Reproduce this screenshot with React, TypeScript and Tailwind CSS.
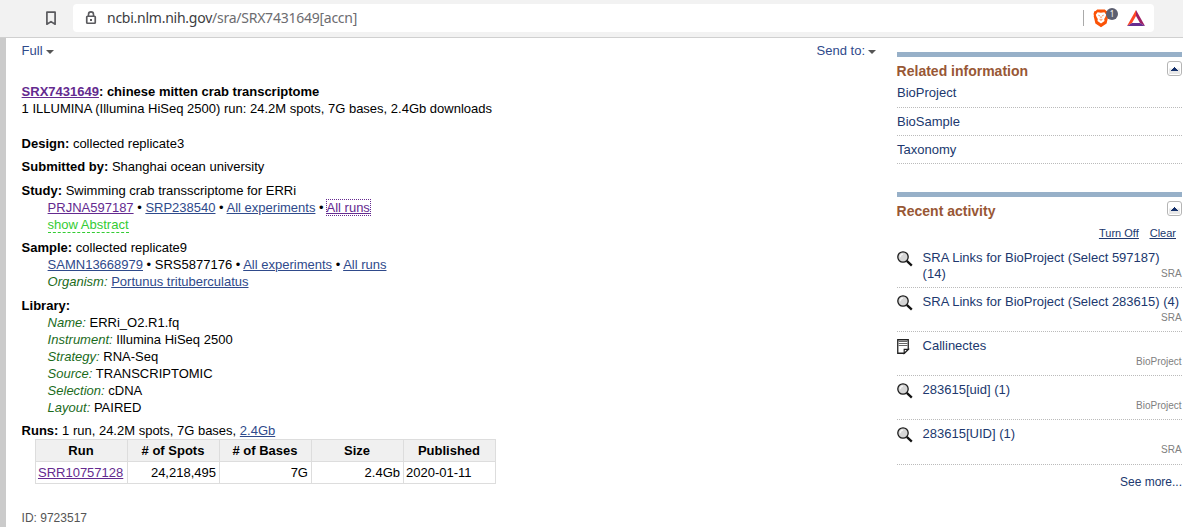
import React from "react";

type Kids = { children: React.ReactNode };

const Link = ({ children }: Kids) => (
  <a className="text-[#2f4a8b] underline">{children}</a>
);
const Visited = ({ children }: Kids) => (
  <a className="text-[#642a8f] underline">{children}</a>
);

const Caret = () => (
  <svg className="ml-[3px] mt-[2px]" width="8" height="4" viewBox="0 0 8 4">
    <path d="M0 0h8L4 4z" fill="#555" />
  </svg>
);

const Bookmark = () => (
  <svg width="12" height="15" viewBox="0 0 12 15">
    <path d="M1.9 1.2h8.2v12L6 10.6l-4.1 2.6z" fill="none" stroke="#5a5a5e" strokeWidth="1.7" strokeLinejoin="round" />
  </svg>
);

const Lock = () => (
  <svg width="12" height="14" viewBox="0 0 12 14">
    <rect x="1.75" y="5.25" width="8.5" height="7" rx="0.8" fill="none" stroke="#5a5a5e" strokeWidth="1.7" />
    <path d="M3.5 5V3.4a2.5 2.5 0 0 1 5 0V5" fill="none" stroke="#5a5a5e" strokeWidth="1.6" />
    <rect x="5" y="8" width="2" height="2" fill="#5a5a5e" />
  </svg>
);

const Lion = () => (
  <svg width="16" height="19" viewBox="0 0 16 19">
    <path d="M4.2 0.5h7.6l1.6 1.6 1.3.2.8 2.7-.4 1.2.2 1-1.7 7.4L8 18.3l-5.6-3.7L.7 7.2l.2-1L.5 5l.8-2.7 1.3-.2z" fill="#fb5206" />
    <path d="M4.6 3.2 8 3.8l3.4-.6 1.8 2.6-.8 2.3-1.2 2 .3 1.8L8 14.5l-3.5-2.6.3-1.8-1.2-2-.8-2.3z" fill="#fff" />
    <path d="M5.4 6.2 6.8 6.9M10.6 6.2 9.2 6.9M8 7.4v1.8M6.6 10.4 8 11.2l1.4-.8" fill="none" stroke="#fb5206" strokeWidth="0.8" />
  </svg>
);

const Triangle = () => (
  <svg width="18" height="16" viewBox="0 0 18 16">
    <path d="M9 0 0 16l5-3L9 6z" fill="#ff4724" />
    <path d="M9 0 18 16l-5-3L9 6z" fill="#9e1f63" />
    <path d="M0 16h18l-5-3H5z" fill="#662d91" />
  </svg>
);

const Magnifier = () => (
  <svg width="16" height="16" viewBox="0 0 16 16">
    <path d="m9.8 9.8 5 4.8" stroke="#111" strokeWidth="2.3" />
    <circle cx="6" cy="6" r="5.2" fill="#d6d6d6" stroke="#1c1c1c" strokeWidth="1.3" />
    <path d="M3.2 6.2A3 3 0 0 1 6 3.2" fill="none" stroke="#f6f6f6" strokeWidth="1.2" />
  </svg>
);

const Note = () => (
  <svg width="13" height="16" viewBox="0 0 13 16">
    <path d="M.75.75h10.5v9.5l-4 4H.75z" fill="#fff" stroke="#222" strokeWidth="1.3" />
    <path d="M1.5 2.5h9M1.5 4.5h9M1.5 6.5h9" stroke="#666" strokeWidth="1" />
    <path d="M7.2 14.4v-4.1h4.2z" fill="#fff" stroke="#222" strokeWidth="1.2" />
  </svg>
);

const Collapse = () => (
  <span className="flex h-[15px] w-[15px] items-center justify-center rounded-[3px] border border-[#b5b5b5] bg-white p-px">
    <span className="flex h-full w-full items-center justify-center bg-linear-to-b from-white from-45% to-[#e8e8e8] to-55%">
      <svg width="7" height="4" viewBox="0 0 7 4">
        <path d="M3 0h1v1h1v1h1v1h1v1H0V3h1V2h1V1h1z" fill="#14306b" />
      </svg>
    </span>
  </span>
);

const PanelHead = ({ children }: Kids) => (
  <div className="flex justify-between border-t-[5px] border-[#97b0c8] pt-[4px] pb-1">
    <h3 className="ml-[-0.4px] pt-[2px] text-[14px] leading-[17px] font-bold text-[#985735]">{children}</h3>
    <Collapse />
  </div>
);

const Activity = ({ icon, label, db }: { icon: "search" | "note"; label: string; db: string }) => (
  <li className="flex h-11 border-b border-dotted border-[#bbb] last:h-[45px]">
    <span className="w-[25.6px] shrink-0 pt-[7px]">{icon === "search" ? <Magnifier /> : <Note />}</span>
    <span className="grid h-[43px] w-[259px] shrink-0">
      <a className="col-start-1 row-start-1 pt-[6px] leading-4 text-[#20386e]">{label}</a>
      <span className="col-start-1 row-start-1 self-end justify-self-end pb-[7px] text-[10px] leading-3 text-[#808080]">
        {db}
      </span>
    </span>
  </li>
);

const Attr = ({ name, children }: Kids & { name: string }) => (
  <div>
    <i className="text-[#1b6b1b]">{name}:</i> {children}
  </div>
);

const headings = ["Run", "# of Spots", "# of Bases", "Size", "Published"];

export default function App() {
  return (
    <div className="flex h-[527px] w-[1183px] flex-col overflow-hidden bg-white font-['Liberation_Sans',sans-serif] text-[13px] leading-[17px] text-black">
      <header className="flex h-[38px] shrink-0 items-start border-b border-[#d0d0d0] bg-[#f2f2f2]">
        <div className="w-[73px] pt-[11px] pl-[45px]">
          <Bookmark />
        </div>
        <div className="mt-1 flex h-7 w-[1081px] items-center rounded-[4px] bg-white pl-3">
          <Lock />
          <span className="ml-[10px] w-[260px] font-['Noto_Sans',sans-serif] text-[14px] leading-5 tracking-[-0.25px] whitespace-nowrap text-[#6c6c70]">
            <span className="text-[#3c3c40]">ncbi.nlm.nih.gov</span>/sra/SRX7431649[accn]
          </span>
          <span className="ml-auto h-4 w-px bg-[#aaa]" />
          <span className="relative ml-[9px]">
            <Lion />
            <span className="absolute top-[-1px] left-[13px] flex h-3 w-3 items-center justify-center rounded-full bg-[#5c5f70] font-['Noto_Sans',sans-serif] text-[8px] leading-3 text-white">
              1
            </span>
          </span>
          <span className="mr-[9px] ml-[18px]">
            <Triangle />
          </span>
        </div>
      </header>

      <div className="flex flex-1">
        <div className="w-[6px] shrink-0 bg-[#cbcbcb]" />
        <main className="w-[870px] shrink-0 pt-1 pl-[15.6px]">
          <div className="flex justify-between">
            <a className="flex items-center text-[#2f4a8b]">
              Full
              <Caret />
            </a>
            <a className="flex items-center text-[#2f4a8b]">
              Send to:
              <Caret />
            </a>
          </div>

          <div className="mt-6">
            <b>
              <Visited>SRX7431649</Visited>: chinese mitten crab transcriptome
            </b>
          </div>
          <div>1 ILLUMINA (Illumina HiSeq 2500) run: 24.2M spots, 7G bases, 2.4Gb downloads</div>

          <div className="mt-[18px]">
            <b>Design:</b> collected replicate3
          </div>
          <div className="mt-[6px]">
            <b>Submitted by:</b> Shanghai ocean university
          </div>
          <div className="mt-[7px]">
            <b>Study:</b> Swimming crab transscriptome for ERRi
            <div className="pl-[26px]">
              <div>
                <Visited>PRJNA597187</Visited> • <Link>SRP238540</Link> • <Link>All experiments</Link> •{" "}
                <span className="outline-1 outline-dotted outline-[#642a8f]">
                  <Visited>All runs</Visited>
                </span>
              </div>
              <div>
                <a className="border-b border-dashed border-[#3c3] text-[#3c3]">show Abstract</a>
              </div>
            </div>
          </div>
          <div className="mt-[6px]">
            <b>Sample:</b> collected replicate9
            <div className="pl-[26px]">
              <div>
                <Link>SAMN13668979</Link> • SRS5877176 • <Link>All experiments</Link> • <Link>All runs</Link>
              </div>
              <Attr name="Organism">
                <Link>Portunus trituberculatus</Link>
              </Attr>
            </div>
          </div>
          <div className="mt-[7px]">
            <b>Library:</b>
            <div className="pl-[26px]">
              <Attr name="Name">ERRi_O2.R1.fq</Attr>
              <Attr name="Instrument">Illumina HiSeq 2500</Attr>
              <Attr name="Strategy">RNA-Seq</Attr>
              <Attr name="Source">TRANSCRIPTOMIC</Attr>
              <Attr name="Selection">cDNA</Attr>
              <Attr name="Layout">PAIRED</Attr>
            </div>
          </div>
          <div className="mt-[6px]">
            <b>Runs:</b> 1 run, 24.2M spots, 7G bases, <Link>2.4Gb</Link>
          </div>

          <div className="ml-[13.4px] grid w-[461px] grid-cols-5 gap-px border border-[#ddd] bg-[#ddd]">
            {headings.map((h) => (
              <div key={h} className="bg-[#f0f0f0] py-[2px] pr-[1px] text-center font-bold">
                {h}
              </div>
            ))}
            <div className="bg-white py-[2px] pl-[2px]">
              <Visited>SRR10757128</Visited>
            </div>
            <div className="bg-white py-[2px] pr-[3px] text-right">24,218,495</div>
            <div className="bg-white py-[2px] pr-[3px] text-right">7G</div>
            <div className="bg-white py-[2px] pr-[3px] text-right">2.4Gb</div>
            <div className="bg-white py-[2px] pl-[2px]">2020-01-11</div>
          </div>

          <div className="mt-[26px] text-[12px] text-[#555]">ID: 9723517</div>
        </main>

        <aside className="ml-[21px] w-[285px] shrink-0 pt-[14px]">
          <section>
            <PanelHead>Related information</PanelHead>
            <ul className="text-[#20386e]">
              <li className="h-[24px] border-b border-dotted border-[#bbb]">BioProject</li>
              <li className="h-[28px] border-b border-dotted border-[#bbb] pt-[5px]">BioSample</li>
              <li className="h-[28px] border-b border-dotted border-[#bbb] pt-[5px]">Taxonomy</li>
            </ul>
          </section>
          <section className="mt-7">
            <PanelHead>Recent activity</PanelHead>
            <div className="mt-[2px] flex justify-end gap-[11px] pr-[6px] text-[11px] leading-[15px] text-[#20386e] underline">
              <a>Turn Off</a>
              <a>Clear</a>
            </div>
            <ul className="mt-[3px]">
              <Activity icon="search" label="SRA Links for BioProject (Select 597187) (14)" db="SRA" />
              <Activity icon="search" label="SRA Links for BioProject (Select 283615) (4)" db="SRA" />
              <Activity icon="note" label="Callinectes" db="BioProject" />
              <Activity icon="search" label="283615[uid] (1)" db="BioProject" />
              <Activity icon="search" label="283615[UID] (1)" db="SRA" />
            </ul>
            <div className="mt-[9px] text-right text-[12px] text-[#20386e]">See more...</div>
          </section>
        </aside>
      </div>
    </div>
  );
}
